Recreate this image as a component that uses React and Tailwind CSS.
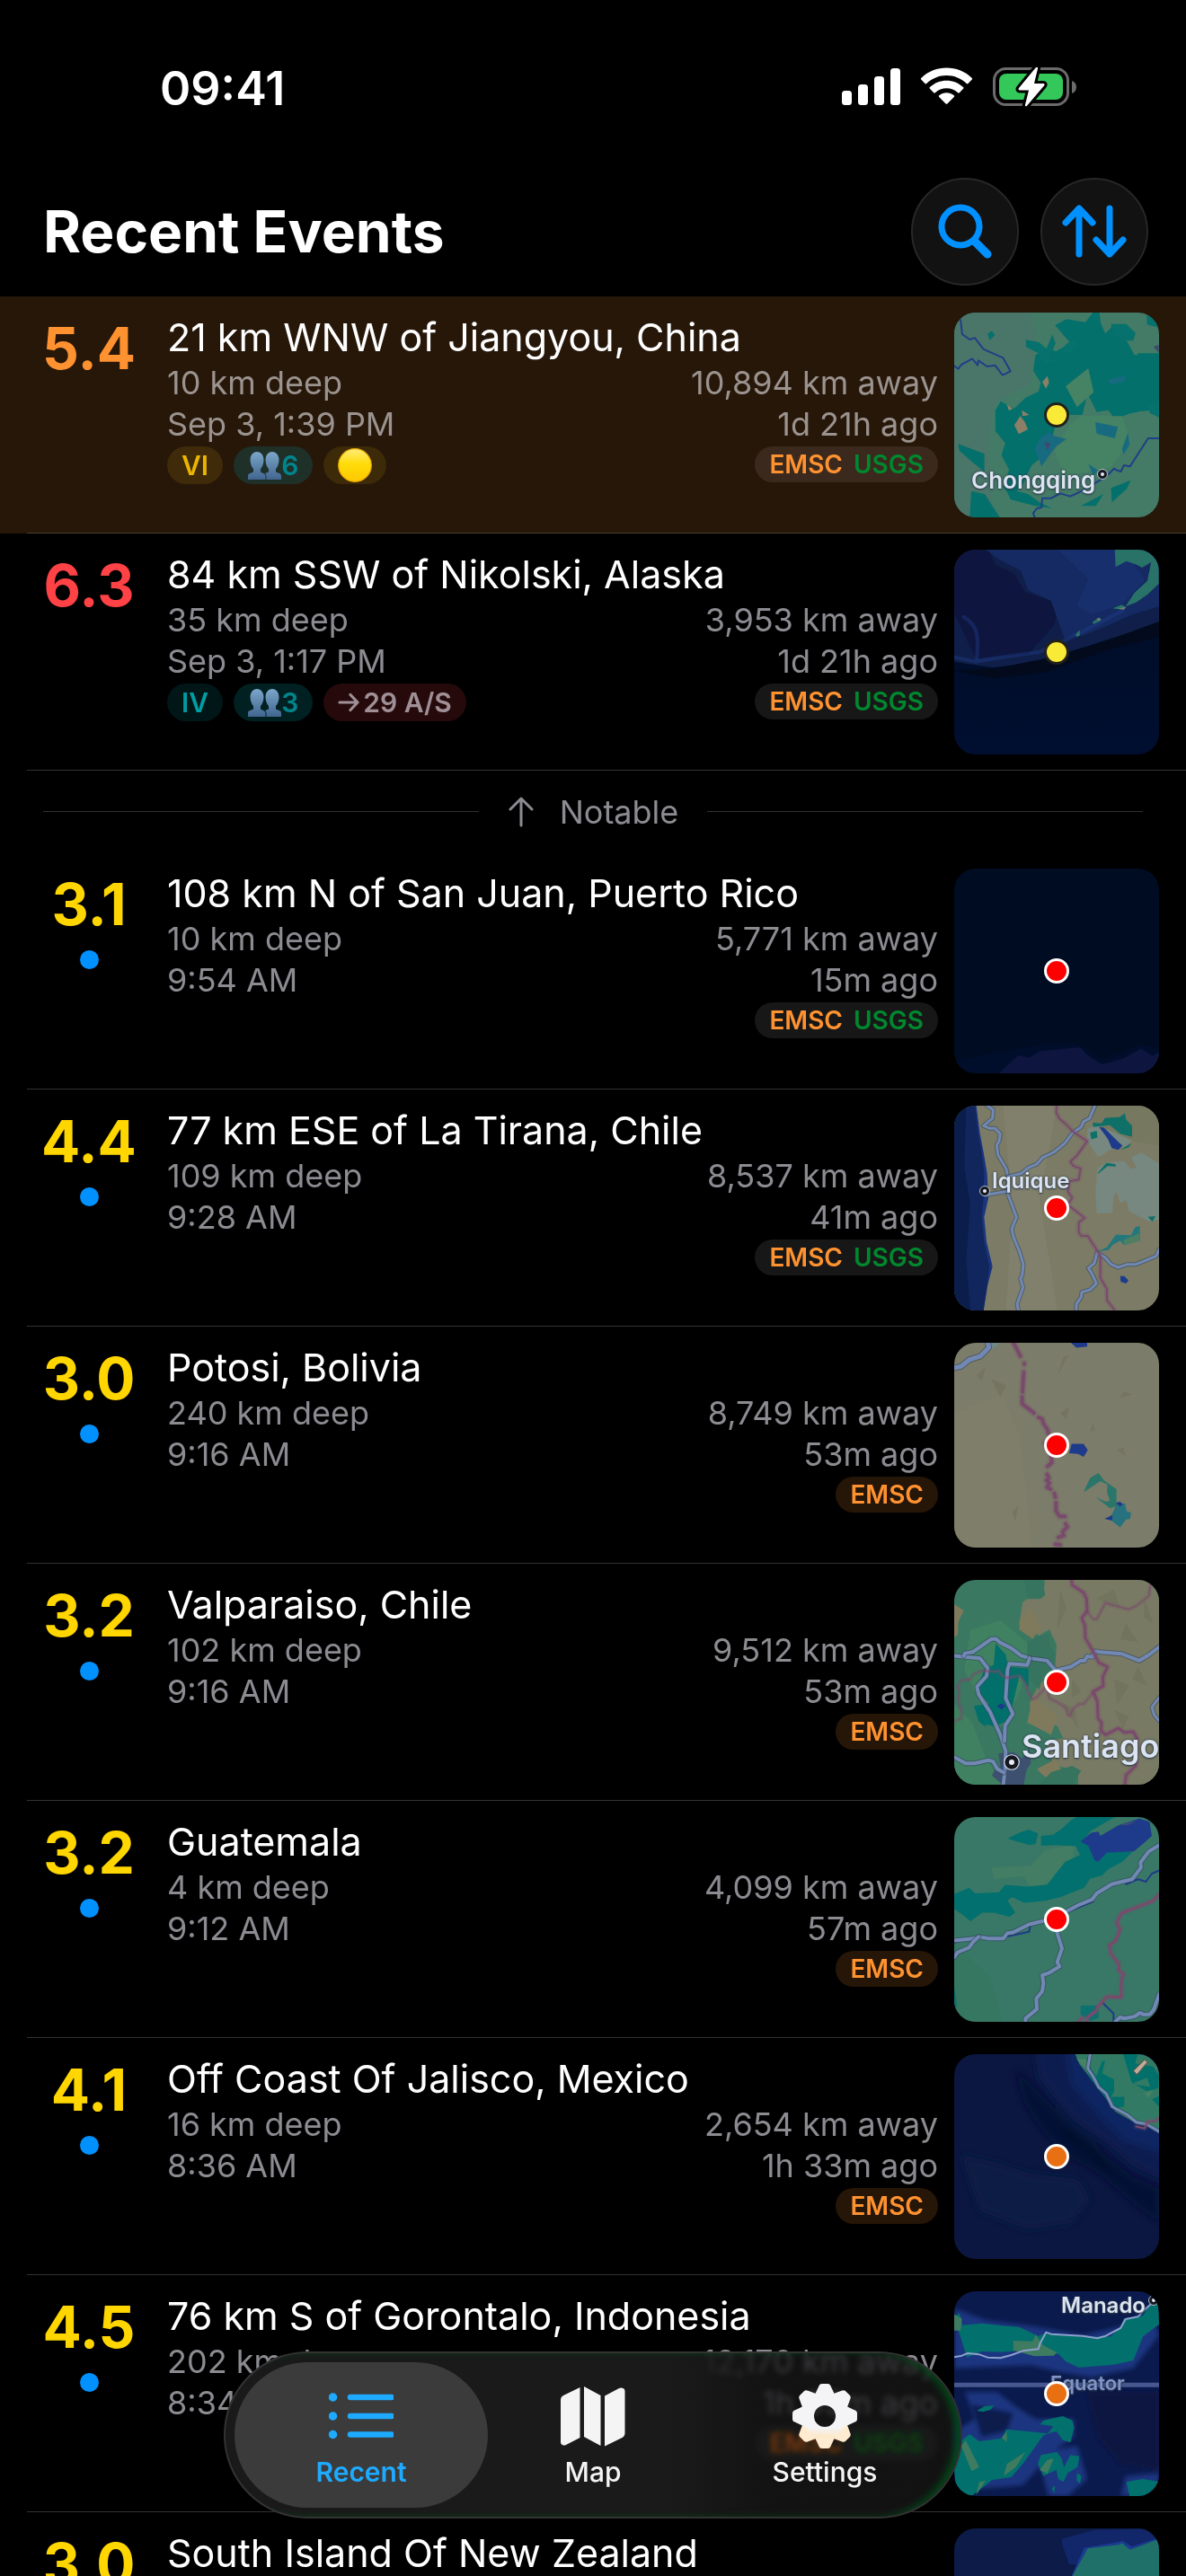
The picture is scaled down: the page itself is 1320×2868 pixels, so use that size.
import clsx from 'clsx';

const events = [
  {
    mag: '5.4',
    magColor: 'text-[#ff9230]',
    place: '21 km WNW of Jiangyou, China',
    depth: '10 km deep',
    time: 'Sep 3, 1:39 PM',
    distance: '10,894 km away',
    ago: '1d 21h ago',
    sources: ['EMSC', 'USGS'],
    map: 'jiangyou',
    marker: 'yellow',
    highlight: true,
    badges: [
      { kind: 'text', label: 'VI', style: 'bg-[#3f2b09] text-[#eab500]' },
      { kind: 'people', label: '6', style: 'bg-[#1f3029] text-[#00858c]' },
      { kind: 'alert', label: 'Yellow alert', style: 'bg-[#3c2a08]' },
    ],
  },
  {
    mag: '6.3',
    magColor: 'text-[#ff4245]',
    place: '84 km SSW of Nikolski, Alaska',
    depth: '35 km deep',
    time: 'Sep 3, 1:17 PM',
    distance: '3,953 km away',
    ago: '1d 21h ago',
    sources: ['EMSC', 'USGS'],
    map: 'nikolski',
    marker: 'yellow',
    badges: [
      { kind: 'text', label: 'IV', style: 'bg-[#011717] text-[#009da3]' },
      { kind: 'people', label: '3', style: 'bg-[#012022] text-[#00858c]' },
      { kind: 'aftershocks', label: '29 A/S', style: 'bg-[#260a0b] text-[#9f9097]' },
    ],
  },
  { divider: 'Notable' },
  {
    mag: '3.1',
    place: '108 km N of San Juan, Puerto Rico',
    depth: '10 km deep',
    time: '9:54 AM',
    distance: '5,771 km away',
    ago: '15m ago',
    sources: ['EMSC', 'USGS'],
    map: 'sanJuan',
    marker: 'red',
    unread: true,
  },
  {
    mag: '4.4',
    place: '77 km ESE of La Tirana, Chile',
    depth: '109 km deep',
    time: '9:28 AM',
    distance: '8,537 km away',
    ago: '41m ago',
    sources: ['EMSC', 'USGS'],
    map: 'tirana',
    marker: 'red',
    unread: true,
  },
  {
    mag: '3.0',
    place: 'Potosi, Bolivia',
    depth: '240 km deep',
    time: '9:16 AM',
    distance: '8,749 km away',
    ago: '53m ago',
    sources: ['EMSC'],
    map: 'potosi',
    marker: 'red',
    unread: true,
  },
  {
    mag: '3.2',
    place: 'Valparaiso, Chile',
    depth: '102 km deep',
    time: '9:16 AM',
    distance: '9,512 km away',
    ago: '53m ago',
    sources: ['EMSC'],
    map: 'valparaiso',
    marker: 'red',
    unread: true,
  },
  {
    mag: '3.2',
    place: 'Guatemala',
    depth: '4 km deep',
    time: '9:12 AM',
    distance: '4,099 km away',
    ago: '57m ago',
    sources: ['EMSC'],
    map: 'guatemala',
    marker: 'red',
    unread: true,
  },
  {
    mag: '4.1',
    place: 'Off Coast Of Jalisco, Mexico',
    depth: '16 km deep',
    time: '8:36 AM',
    distance: '2,654 km away',
    ago: '1h 33m ago',
    sources: ['EMSC'],
    map: 'jalisco',
    marker: 'orange',
    unread: true,
  },
  {
    mag: '4.5',
    place: '76 km S of Gorontalo, Indonesia',
    depth: '202 km deep',
    time: '8:34 AM',
    distance: '12,170 km away',
    ago: '1h 35m ago',
    sources: ['EMSC', 'USGS'],
    map: 'gorontalo',
    marker: 'orange',
    unread: true,
  },
  {
    mag: '3.0',
    place: 'South Island Of New Zealand',
    sources: [],
    map: 'newZealand',
    marker: 'orange',
    unread: true,
  },
];

/* ---------- map drawings ---------- */

const MapLabel = ({ className, children }) => (
  <span
    className={clsx(
      'absolute leading-none font-semibold [text-shadow:0_0_3px_#2f3b46,0_1px_2px_#2f3b46]',
      className
    )}
  >
    {children}
  </span>
);

const CityDot = ({ className }) => (
  <svg viewBox="0 0 12 12" className={clsx('absolute', className)} aria-hidden="true">
    <circle cx="6" cy="6" r="5.500" fill="#16181f" stroke="#dbe4f2" strokeWidth="0.8" />
    <circle cx="6" cy="6" r="2" fill="#e6ecf6" />
  </svg>
);

const Line = ({ d, color = '#7288b4', width = 4, ...rest }) => (
  <path
    d={d}
    fill="none"
    stroke={color}
    strokeWidth={width}
    strokeLinejoin="round"
    strokeLinecap="round"
    vectorEffect="non-scaling-stroke"
    {...rest}
  />
);

const Road = ({ d, width = 4 }) => (
  <>
    <Line d={d} color="#33475a" width={width + 2} opacity="0.6" />
    <Line d={d} width={width} />
  </>
);

const Border = ({ d, width = 3 }) => (
  <>
    <Line d={d} color="#7a4a6c" width={width + 4} opacity="0.25" />
    <Line d={d} color="#7a4a6c" width={width} />
  </>
);

const maps = {
  jiangyou: {
    viewBox: '955 54 542 684',
    art: (
      <>
        <rect x="955" y="54" width="542" height="684" fill="#447b66" />
        <path d="M955 54h200l20 90-20 150-90 60-20 120 10 260h-100z" fill="#4a7669" />
        <path d="M1327 54h12l4 35 10 30 14 20 20 30 20 25 90 6v178l-50 6-30 8-35 18-20-30-30 6-24-60-14 70h-36l-36 40-10 50-22 48-30 30-22 60-30 44-24-30 16-60-20-48 10-40-26-40 0-70 14-30 36 24 30-36 34-20 6-30-20-40 6-52 34-26 20 14 38-28-40-60 30-20 50 10 50-80z" fill="#04706c" />
        <path d="M1290 220l44-66 40-56 34 42 30 70-30 60-60 10zM1440 190h57v180h-60z" fill="#04706c" />
        <path d="M1145 145l34 8 20 22 16-48 8 30-16 50 22 12-36 4-16-34-32-20zM1250 160l30-20-4 30-18 24-14-8zM1370 92l40 0 25 30-6 26-30 0-26-26zM1043 125l12-10 8 14-14 18zM1465 54h32v50l-32-10zM1464 360l33-6v50l-24-14z" fill="#06716d" />
        <path d="M965 492l70 34v60l-30-30-36-40zM1000 650l36 10 20 40 20 38h-80zM1090 640l60 20 34 30 30 18-50-10-60-20zM1370 640l52-26-10 28-40 46zM1290 700l60-40-20 40z" fill="#04706c" />
        <path d="M1250 300l60-60 14 80-44 50zM1290 400l110 0 20 80-50 90-120 30-30-80 40-90z" fill="#468264" />
        <path d="M1184 470l22-16 12 12 34 10-28 26-18 30-20 36-18-60zM1328 420l60 16-8 38-48-16zM1310 560l24 20-10 22zM1415 455l4 40-16 34-4-20zM1362 280l50-18-10 24-34 8z" fill="#176a80" />
        <path d="M1130 400l12 20 8 24-24 16-12-30zM1202 266l4 22-8 20-10-22zM1094 360l16 14-10 8zM1134 380l20 16-18 4z" fill="#8c7f68" />
        <path d="M1194 485l16 6-8 24zM1482 168l14-6v26z" fill="#40486f" />
        <Line d="M972 78L976 126 996 144 1010 139 1032 176 1084 205 1104 250 1083 263 1063 230 1042 234 1019 214 1017 230 1003 208 974 228 966 242 955 232" color="#1f3f86" width={2} />
        <Line d="M1497 474H1468L1420 568 1404 564 1396 585 1384 580 1378 575 1358 600 1330 622 1286 654 1262 668 1236 658 1212 674 1188 674 1186 705 1174 708 1164 724 1168 738" color="#1f3f86" width={2} />
      </>
    ),
    labels: (
      <>
        <MapLabel className="top-[174px] left-[19px] text-[26px] text-[#dbe4f2]">Chongqing</MapLabel>
        <CityDot className="top-[174px] left-[159px] size-3" />
      </>
    ),
  },
  nikolski: {
    viewBox: '955 66 542 684',
    art: (
      <>
        <defs>
          <linearGradient id="pacific" x1="0" y1="0" x2="0" y2="1">
            <stop offset="0" stopColor="#000d24" />
            <stop offset="1" stopColor="#000e30" />
          </linearGradient>
        </defs>
        <rect x="955" y="66" width="542" height="684" fill="url(#pacific)" />
        <path d="M955 66h542v250l-120 44-100 40-90 40-130 20-102-20z" fill="#101f4a" />
        <path d="M955 66h90l20 50 50 30 26 60 90 40-10 70-70 100-140 12-56-150z" fill="#0e163f" />
        <path d="M1040 66h457v190l-70 26-70 40-60 30-50 10-36-126-60-34-20-66-56-36z" fill="#152a62" />
        <path d="M1230 66h170l60 100-60 80-80 36-40-30 30-90z" fill="#1a3273" opacity="0.7" />
        <Line d="M980 290C1020 320 1020 360 1014 436M955 425L1010 440 1080 425 1180 408 1250 368 1340 310 1400 270" color="#21408f" width={4} opacity="0.4" />
        <path d="M955 470l120-10 120-30 140-50 162-74v50l-150 50-150 70-140 20z" fill="#020a1c" />
        <path d="M1380 66h96l20 50v64l-30 36-30 26-28 14 24-46 34-40 10-62-24 18-14-10-28-12-28 20z" fill="#287268" />
        <path d="M1374 262l24-12 12 8-12 8zM1320 308l20-16 4 10-20 12zM1276 350l10-16 2 18-8 6z" fill="#287268" />
        <path d="M1388 262l22-4-6 8zM1332 294l12 4-8 6z" fill="#7c806a" />
      </>
    ),
  },
  sanJuan: {
    viewBox: '66 78 684 662',
    art: (
      <>
        <rect x="66" y="78" width="684" height="662" fill="#000c22" />
        <path d="M66 700l150-30 150-25h110l90 50 130-50 54 20v75H66z" fill="#000e2c" />
        <path d="M215 740l65-58 35 8 40-22 130-12 30 28 45 28 70-20 60-32 38 24 22-12v68z" fill="#0e163f" />
      </>
    ),
  },
  tirana: {
    viewBox: '66 845 684 662',
    art: (
      <>
        <rect x="66" y="845" width="684" height="662" fill="#7c7c66" />
        <path d="M230 845h180l-60 300 60 362H240l20-340z" fill="#848471" opacity="0.6" />
        <path d="M520 845h230v130l-110-20-90 40z" fill="#76785f" />
        <path d="M66 845h74l12 90 12 60 12 70 4 80-14 60 8 80 20 80-16 60-14 82H66z" fill="#1a3580" />
        <path d="M66 845h70l10 90 12 60 8 70-2 80-6 60 8 80 18 80-20 142H66z" fill="#11265c" />
        <path d="M66 845h40l-6 200 20 120-14 180 14 162H66z" fill="#0b1d4a" />
        <path d="M512 920l28-12 16 6 60 24 44 20-24 20-50 10-40 24-12-20-24-34zM658 1012l34-16 20 14 38 22v180l-30 8-70-34-8-34-24 6-4-24-10-8-6 12-4 54-52 2-4-66 6-80 30-20 60-4 20 26 20-4z" fill="#778880" />
        <path d="M528 900l30 2 12-18 48-2 18-12 4 20 20 20v36l-40-10-34-28-56 6zM520 932l22-6 2 22-20 6zM620 988l38-22-10 14zM544 1064l30-34 30 4 2 8-28-2-30 24zM712 1204l26-2-10 18z" fill="#0f7068" />
        <path d="M546 1316l30-14 30-40 50 2 14-26 16-4v48l-54 12-12-12-24 12-14 18z" fill="#24787c" />
        <path d="M630 1280l54-22v24l-46 14z" fill="#4e7f62" />
        <path d="M550 914l16 2 50 48 12 10-14 14-22-6-12-28zM620 1396h14l14 14-8 10-18-6z" fill="#1e3a8a" />
        <Road d="M176 845L196 858 194 886 164 910 184 918 202 918 220 936 216 960 208 972 212 1004 240 1050 245 1074 245 1130 274 1205 258 1244 264 1270 284 1316 297 1358 293 1395 287 1404 296 1432 276 1486 280 1506" width={3} />
        <Road d="M536 845L518 886 498 896 490 914 460 934 436 966 398 996 362 1012 342 1034 316 1044 290 1064 245 1074" width={3} />
        <Road d="M750 1310L740 1332 672 1358 644 1358 614 1368 590 1358 570 1336 543 1320 534 1354 514 1370 528 1392 541 1420 520 1440 492 1448 490 1464 474 1486V1507M170 1134L240 1122" width={3} />
        <Border d="M408 845L406 866 418 888 436 902 464 930 510 960 476 1006 454 1026 464 1040 488 1048 482 1084 450 1090 446 1124 460 1142 446 1166 502 1208 482 1222V1254L490 1266H512L546 1318 554 1330V1402L576 1438V1474L600 1504" width={2} />
      </>
    ),
    labels: (
      <>
        <MapLabel className="top-[72px] left-[42px] text-[24px] text-[#dbe4f2]">Iquique</MapLabel>
        <CityDot className="top-[89px] left-[28px] size-3" />
      </>
    ),
  },
  potosi: {
    viewBox: '66 73 684 662',
    art: (
      <>
        <rect x="66" y="73" width="684" height="662" fill="#7b7c69" />
        <path d="M66 300l160-60 60 140 40 355H66z" fill="#82816d" opacity="0.6" />
        <path d="M190 190l50 20-20 40zM410 180l20-60 20-10zM420 300l30-20-10 40zM630 230l30 10-40 12zM520 360l10-30 6 26zM140 180l30-30-10 46zM610 420l20-10 10 30zM260 620l20-20-10 50z" fill="#6f705b" opacity="0.6" />
        <Road d="M178 73L182 88 154 116 116 128 88 150 66 154" width={5} />
        <path d="M190 73h30l-26 22z" fill="#6d8886" />
        <path d="M456 73h54v12l-36 4zM450 430l8-30h40l14 20-14 22-18-10z" fill="#1e3a8a" />
        <path d="M498 556l22-46 28-16 18 24 42 28v46l6 8-28 8-48-36 36 16 12-6-10-24 2-26-24-12-40 26z" fill="#2b766a" />
        <path d="M592 630l14-30 30-8 6 26 14 4-2 20-14 2-20 26-26-20z" fill="#27727e" />
        <path d="M606 592l12-6 12 8-10 8zM568 642l26-12v18z" fill="#1e3a8a" />
        <Border d="M264 73L287 116M300 140V142M298 168L294 232M293 248V270L332 300M348 314L360 320 364 334 378 354 380 366M370 396L390 440 392 460 378 472M376 498L382 510 374 518 384 526 376 540 388 546M400 560L404 572M406 590V616L418 634H436M438 658L444 668 428 684 432 696 414 702M404 724L420 726" width={4} />
      </>
    ),
  },
  valparaiso: {
    viewBox: '66 839 684 662',
    art: (
      <>
        <rect x="66" y="839" width="684" height="662" fill="#3a7862" />
        <path d="M66 1240l60 60 40 100 60 101H66zM120 1000l100-30 100 80-30 140-60 120-70-60-60-120z" fill="#3f8160" />
        <path d="M272 839h478v662H480v-50l-80-10-30-80 60-10-20-40-88-30-4-44 30-60 54-40 6-88-24-50-34 20-26-14-40-24 10-70 46-28 28-20 0-26-40 0-12-26-22-4z" fill="#797a63" />
        <path d="M66 918l32 20-18 36-2 44-12 6zM342 1450l60-30 20 30-30 40-30-20zM284 970l40-40 30 60-26 40-44-30zM330 1210l80 70-20 60-80-40z" fill="#7f7a5c" />
        <path d="M420 870l20 60-30 70zM540 900l60-30 20 60zM640 980l40 60-60-10zM600 1160l50 20-40 60zM460 1160l30 40-30 20zM680 1120l30 60-50-20zM420 1230l50 30 10 60zM600 1260l50 20-20 40zM700 900l30 80-30-20z" fill="#6c6e59" opacity="0.5" />
        <path d="M300 839h60l10 48-16 14-44 0zM310 1110l0-70 40-20 34-6 0 40 20 20-4 60-40 20-10 40-40-40z" fill="#37745f" />
        <path d="M204 1044l34 36 8 40 68 6v62l-30-40-10 40-14 60 0 40-60 24-30-6 4 10-26-20-16-50 50-6-40-46 26-70 30-10z" fill="#02706a" />
        <path d="M390 1460l70-20 30 16-30 45h-110l20-20z" fill="#37745f" />
        <path d="M214 1400l50-4 30 20 24-34 4 50-14 20-10 49h-70l-36-30 10-20 20 4z" fill="#3d5070" />
        <path d="M208 1248l14-10 16 8-14 12z" fill="#1e3a8a" />
        <Road d="M66 1084L152 1092 178 1124 174 1150 142 1184 148 1210 186 1266 220 1340 238 1392 236 1450 230 1501" />
        <Road d="M98 1084L102 1076 128 1072 190 1030 206 1030 220 1042 254 1058 290 1084 318 1092 376 1100 404 1132 456 1120 488 1100 502 1100 510 1086 528 1088 536 1070 552 1072 626 1078 684 1100 718 1080 750 1056" />
        <Road d="M318 1092L310 1114 250 1110 244 1130 238 1222 262 1272 236 1310 234 1360M66 1412L104 1432 134 1432 180 1422 196 1426 210 1450 232 1462" />
        <Road d="M750 1220L726 1250 734 1276 750 1294" width={3} />
        <Border d="M458 839L460 856 498 880 508 900 510 940 492 962 502 986 504 1028 530 1070 548 1106 578 1120 562 1152 564 1182 530 1200 544 1232 546 1286 558 1300 556 1326 572 1340 614 1318 634 1332 664 1330 676 1350 672 1440 640 1470 636 1501" />
        <Border d="M508 940L530 966 542 966 570 914 600 922 648 934 676 922 704 900 716 890 722 852M72 1294L90 1286 92 1274 78 1220 84 1206 78 1180 92 1162 118 1162 130 1144 160 1132 204 1136 216 1132 222 1146 244 1156 284 1148 304 1174 312 1200 326 1224 340 1220 370 1188M376 1196L384 1222 410 1234 440 1254 446 1276 454 1278 462 1256 484 1240 498 1240 530 1204" width={1} />
      </>
    ),
    labels: (
      <>
        <MapLabel className="top-[167px] left-[75px] text-[36px] text-[#dbe4f2]">Santiago</MapLabel>
        <CityDot className="top-[194px] left-[55px] size-[18px]" />
      </>
    ),
  },
  guatemala: {
    viewBox: '66 67 684 662',
    art: (
      <>
        <rect x="66" y="67" width="684" height="662" fill="#397866" />
        <path d="M190 230l130-6 50-50 100-20-10 60-60 60-80 24-20-40-100 10z" fill="#427d64" />
        <path d="M66 480l120 100 40 149H66z" fill="#35765f" opacity="0.6" />
        <path d="M246 136l40-20 30-8 30 12-8 34-20 4-70-20zM356 128l40-4 30-20 30-26 20-11h126l-80 45-40 50-76-4-50 2zM66 316l50-20 20 18 80-4 20-24 70 6 70-6 60-74 50-22-20-40 50-6 144 36-30 30-50 26-20 20-40 10-20 30-80 30-50 12-70 6-40-18-16 10 26 40-20 14-50-14-40 0-40 28-24-20-30-20z" fill="#02706e" />
        <path d="M488 676l58 0 4 40-30 10-32-20zM66 616l10 60-10 20z" fill="#0c7270" />
        <path d="M488 146l36-28 24-4 6 14 60-34 70-22 34 10 8 46-30 26-30 24-90 4-30 30-12-6-20-46z" fill="#1e3a8a" />
        <path d="M620 94l30-12 24 0-30 12z" fill="#3a4a78" />
        <Line d="M66 474L84 466 130 462M240 454L316 438 320 420M640 284L680 268 706 276 726 250 750 240M560 666L598 702V729M440 376L530 340" color="#1e3a8a" width={2} />
        <Road d="M66 466L132 460 148 454 182 460H230L244 442 262 440 316 414 360 404 410 388 480 352 526 334 542 314 592 284 660 268 690 230 688 214 716 178 750 158" />
        <Road d="M66 520L78 504 114 490 132 468 148 454M406 430L426 492 410 536 418 550 380 572 360 578 364 604 360 630 340 654 342 688 304 718V729M604 729L620 714 634 718 668 712 686 700 700 706 720 704 732 690 750 640" />
        <Border d="M750 318L730 338 624 378 608 410 620 428 606 466 584 482 590 510 616 542V564L632 576 624 592V650L576 648 544 682 540 694 512 714 508 729M494 716L480 729" />
      </>
    ),
  },
  jalisco: {
    viewBox: '66 834 684 662',
    art: (
      <>
        <defs>
          <filter id="sea" x="-20%" y="-20%" width="140%" height="140%">
            <feGaussianBlur stdDeviation="14" />
          </filter>
        </defs>
        <rect x="66" y="834" width="684" height="662" fill="#0b1740" />
        <g filter="url(#sea)">
          <path d="M330 800h460v454l-130-60-80-70-120-80-110-130z" fill="#0d1f50" />
          <path d="M440 800h350v360l-160-50-90-90-80-90z" fill="#102564" />
          <path d="M270 880l70 70 90 90 90 70 60 60 80 60 90 40v110l-80-60-60-50-60-50-110-60-80-80-60-90z" fill="#071233" opacity="0.85" />
          <path d="M420 1070l110 66 60 64-24 0-60-60-76-46z" fill="#000a28" />
          <path d="M90 1160l100 20 130 40 160 20 40 60-60 80-150 20-160-60z" fill="#0c1b45" />
        </g>
        <path d="M470 834h280v246l-80-24-66-36-40-54-40-50-40-50z" fill="#337a64" />
        <path d="M508 846l12 0 0 30 20 30 20-50 10 0-10 40 40 20 0 40-20 30-34-40-30-40zM588 972h46v32l-30 4zM630 834h50l-10 30 60 10 20 30-2 40-40 10-50-30zM660 930l60 10-10-30zM726 980l24-10v34z" fill="#02706a" />
        <path d="M474 850l34 0 0 34zM700 960l30-10-14 26z" fill="#468264" />
        <Road d="M520 834L512 880 530 906 548 940 574 962 594 1004 644 1030 674 1054 708 1060 750 1084" width={3} />
        <Border d="M674 1068L702 1074 712 1052 738 1050 750 1042" width={2} />
        <path d="M664 888l38-36 10 8-36 40z" fill="#c4ab97" stroke="#5b5a4c" strokeWidth="3" />
      </>
    ),
  },
  gorontalo: {
    viewBox: '846 63 638 684',
    art: (
      <>
        <defs>
          <filter id="shelf" x="-20%" y="-20%" width="140%" height="140%">
            <feGaussianBlur stdDeviation="8" />
          </filter>
        </defs>
        <rect x="846" y="63" width="638" height="684" fill="#0b1a4c" />
        <g filter="url(#shelf)">
          <path d="M846 120l100 40 150 20 150 30 120-30 90-60 28 90-80 110-130 30-110-20-80-20-238 10z" fill="#1a3480" />
          <path d="M880 400l100 0 60 50 60 40 120 0 0 60-60 40-100 120-210 20v-200l60-40zM1100 600l130-20 30 110-60 57h-60zM1380 680l104-10v77h-120z" fill="#1a3480" />
          <path d="M900 440l130 30-20 60-80 20z" fill="#0b1a4c" />
          <path d="M1260 400h224v260l-120-20-70-90z" fill="#0a1640" />
        </g>
        <path d="M846 150l16-14 10 40 60-6 66 8 50 4 60 30 26-10 120 14 80-2 30-30 10-30 60-10 46-80 4 110-50 40-30 80-60 14-110 10-40-20-24-26-120-10-60 4-60-2-44 20z" fill="#02706c" />
        <path d="M1030 228l60 2 10-22 22 34 44 26-10 10-60 2-66-20zM846 140l24 14-4 40-20 0z" fill="#3f7b60" />
        <path d="M870 560l24-20 30 24 70-10 14-30 40 4 90 10 16-24-40-6 10-14 60-14 30 14 6 24-12 50-24-8-20-30-40 14-60 90-40 50-60 10-60 50h-30l-24-40-4-50z" fill="#02706c" />
        <path d="M868 580l14-20 42 90-24 14zM1000 680l10-40 58-40-30 50zM914 744l10-44 20-4zM994 552l16-20v34z" fill="#3f7b60" />
        <path d="M916 462l26-16 28-2-10 14-24 8zM1106 640l10-30 50-10 14 20 8 30 20-40 28 4-6 36-30 20-14 30-16-10-6-30-20 10-20 10zM1228 670l14 10-4 26-10-10zM1150 722l10-10-2 26zM1382 700l50-10 50 8v49h-90z" fill="#02706c" />
        <path d="M1112 660l24-34 20-4-20 50z" fill="#3f7b60" />
        <Line d="M846 376H1484" color="#46588f" width={5} />
        <Line d="M846 283L870 278 888 270 924 274 950 284 990 286 1024 276 1060 262 1108 256 1114 236 1132 200 1148 206 1246 212 1292 220 1318 212 1364 186 1380 156 1418 148 1440 124 1460 104" color="#8da0cc" width={2} />
      </>
    ),
    labels: (
      <>
        <MapLabel className="top-[4px] left-[119px] text-[24px] text-[#dbe4f2]">Manado</MapLabel>
        <MapLabel className="top-[91px] left-[107px] text-[22px] text-[#8094cc]">Equator</MapLabel>
        <CityDot className="top-[4px] left-[216px] size-3" />
      </>
    ),
  },
  newZealand: {
    viewBox: '846 855 638 684',
    art: (
      <>
        <rect x="846" y="855" width="638" height="684" fill="#0c1b48" />
        <path d="M1180 890l100-30 204-5v120h-280l-20-60z" fill="#12266a" />
        <path d="M1250 920l110-20 10-4 30 20 84-30v653h-400l60-300 66-220z" fill="#1b3b90" />
        <path d="M1262 922l96-12 10-6 26 22 90-36v649h-390l60-290 58-230z" fill="#1f7068" />
      </>
    ),
  },
};

const markerStyles = {
  yellow: 'border-[#22211a] bg-[#faea38]',
  red: 'border-white bg-[#ff0000]',
  orange: 'border-white bg-[#e96f13]',
};

const MapThumb = ({ name, marker }) => {
  const { viewBox, art, labels } = maps[name];
  return (
    <div className="relative size-[228px] shrink-0 overflow-hidden rounded-3xl">
      <svg viewBox={viewBox} preserveAspectRatio="none" className="size-full" aria-hidden="true">
        {art}
      </svg>
      {labels}
      <span
        className={clsx('absolute inset-0 m-auto size-7 rounded-full border-3', markerStyles[marker])}
      />
    </div>
  );
};

/* ---------- row pieces ---------- */

const PeopleIcon = () => (
  <svg viewBox="0 0 37 31" className="h-[31px] w-[37px]" aria-hidden="true">
    <defs>
      <linearGradient id="people" x1="0" y1="0" x2="0" y2="1">
        <stop offset="0" stopColor="#7ba6c9" />
        <stop offset="1" stopColor="#41658f" />
      </linearGradient>
    </defs>
    <g fill="url(#people)">
      <path d="M10 0c4.500 0 7.500 4 7.500 9 0 4-1.500 8-3.500 10v3.500l4 2c1 .5 1.500 1.500 1.500 3V31H0v-3.500c0-1.500.3-2.400 1-3l5-2V19c-2-2-3.500-6-3.500-10 0-5 3-9 7.500-9z" />
      <path d="M27 0c4.500 0 7.500 4 7.500 9 0 4-1.500 8-3.500 10v3.500l5 2c.7.600 1 1.500 1 3V31H20.500v-3.500c0-1.500-.5-2.800-1.500-3.500l4-1.500V19c-2-2-3.500-6-3.500-10 0-5 3-9 7.500-9z" />
    </g>
  </svg>
);

const AlertBall = () => (
  <svg viewBox="0 0 38 38" className="size-[38px]" role="img" aria-label="Yellow alert">
    <defs>
      <linearGradient id="ball" x1="0" y1="0" x2="0" y2="1">
        <stop offset="0" stopColor="#ffec7a" />
        <stop offset="0.45" stopColor="#ffdc0a" />
        <stop offset="1" stopColor="#ffc800" />
      </linearGradient>
    </defs>
    <circle cx="19" cy="19" r="18.300" fill="url(#ball)" stroke="#e9a800" strokeWidth="1.200" />
  </svg>
);

const Badge = ({ kind, label, style }) => (
  <span
    className={clsx('flex h-[42px] items-center rounded-full px-4 text-[30px] font-semibold', style)}
  >
    {kind === 'people' && <PeopleIcon />}
    {kind === 'aftershocks' && (
      <svg viewBox="0 0 24 24" className="mr-1 size-6" fill="none" stroke="currentColor" aria-hidden="true">
        <path d="M2 12h20M14 3.500L22 12l-8 8.500" strokeWidth="3.200" strokeLinecap="round" strokeLinejoin="round" />
      </svg>
    )}
    {kind === 'alert' ? <AlertBall /> : label}
  </span>
);

const sourceColors = { EMSC: 'text-[#ff9230]', USGS: 'text-[#00882f]' };

const Sources = ({ sources, highlight }) => {
  const bg = highlight ? 'bg-[#3b291d]' : sources.length > 1 ? 'bg-[#171717]' : 'bg-[#261607]';
  return (
    <span className={clsx('mt-0.5 flex h-10 items-center gap-3 rounded-full px-4 text-[28px] font-semibold', bg)}>
      {sources.map((s) => (
        <span key={s} className={sourceColors[s]}>
          {s}
        </span>
      ))}
    </span>
  );
};

const EventRow = ({ event }) => {
  const { mag, magColor = 'text-[#ffd600]', place, depth, time, distance, ago } = event;
  return (
    <li className={clsx('flex h-[264px] shrink-0 flex-col', event.highlight && 'bg-[#261709]')}>
      <div className="flex flex-1 px-[30px] pt-[18px]">
        <div className="mr-[18px] flex w-[138px] shrink-0 flex-col items-center">
          <span className={clsx('text-[64px] leading-[80px] font-bold', magColor)}>{mag}</span>
          {event.unread && <span className="mt-[11px] size-[21px] rounded-full bg-[#0091ff]" />}
        </div>
        <div className="mr-[18px] min-w-0 flex-1">
          <h2 className="truncate text-[43px] leading-[55px] text-white">{place}</h2>
          <div
            className={clsx(
              'flex justify-between text-[36px] leading-[46px]',
              event.highlight ? 'text-[#9b938f]' : 'text-[#8c8b91]'
            )}
          >
            <div>
              <p>{depth}</p>
              <p>{time}</p>
              {event.badges && (
                <div className="mt-0.5 flex gap-3">
                  {event.badges.map((b) => (
                    <Badge key={b.label} {...b} />
                  ))}
                </div>
              )}
            </div>
            <div className="flex flex-col items-end">
              <p>{distance}</p>
              <p>{ago}</p>
              {event.sources.length > 0 && <Sources sources={event.sources} highlight={event.highlight} />}
            </div>
          </div>
        </div>
        <MapThumb name={event.map} marker={event.marker} />
      </div>
      <div className={clsx('ml-[30px] h-px', event.highlight ? 'bg-[#4a3e33]' : 'bg-[#323234]')} />
    </li>
  );
};

const SectionDivider = ({ label }) => (
  <li className="flex h-[91px] shrink-0 items-center gap-8 px-12 text-[36px] text-[#8c8b91]">
    <span className="h-px flex-1 bg-[#323234]" />
    <span className="flex items-center gap-7">
      <svg viewBox="0 0 30 34" className="h-[34px] w-[30px]" fill="none" stroke="currentColor" aria-hidden="true">
        <path d="M15 32V2M3 14L15 2l12 12" strokeWidth="3" strokeLinecap="round" strokeLinejoin="round" />
      </svg>
      {label}
    </span>
    <span className="h-px flex-1 bg-[#323234]" />
  </li>
);

/* ---------- chrome ---------- */

const StatusBar = () => (
  <div className="flex items-center justify-between pt-[71px] pr-[120px] pl-[178px]">
    <span className="text-[52px] leading-[56px] font-semibold">09:41</span>
    <svg viewBox="936 75 264 48" className="h-12 w-[264px]" aria-hidden="true">
      <g fill="#fff">
        <rect x="937" y="101" width="11" height="16" rx="3.500" />
        <rect x="955" y="94" width="11" height="23" rx="3.500" />
        <rect x="973" y="85" width="11" height="32" rx="3.500" />
        <rect x="991" y="76" width="11" height="41" rx="3.500" />
        <path d="M1053.500 84c8.500 0 16.500 3.400 22.300 9 .5.500 1.200.5 1.700 0l4.300-4.400c.5-.5.5-1.200 0-1.700-15.800-15.100-40.800-15.100-56.600 0-.5.500-.5 1.200 0 1.700l4.300 4.400c.5.500 1.200.5 1.700 0 5.900-5.600 13.800-9 22.300-9z" />
        <path d="M1053.500 98.300c4.700 0 9.200 1.700 12.600 4.900.5.500 1.200.4 1.700 0l4.300-4.400c.5-.5.5-1.200 0-1.700-10.500-9.800-26.700-9.800-37.200 0-.5.500-.5 1.200 0 1.700l4.300 4.400c.5.500 1.200.5 1.700 0 3.400-3.200 7.900-4.900 12.600-4.900z" />
        <path d="M1061.800 107.900c.5-.5.5-1.300 0-1.700-4.800-4.100-11.800-4.100-16.600 0-.5.400-.5 1.200 0 1.700l7.400 7.500c.5.500 1.300.5 1.800 0z" />
      </g>
      <rect x="1106.500" y="76.500" width="82" height="40" rx="13" fill="none" stroke="#6b6b6b" strokeWidth="3" />
      <path d="M1193 90c3 1 5 3.600 5 7s-2 6-5 7z" fill="#6b6b6b" />
      <rect x="1112" y="82" width="71" height="29" rx="8" fill="#34c759" />
      <path
        d="M1153 75l-19 23c-1 1.500-.4 2.500 1.200 2.500h9.800l-4 16c-.5 2 1 2.500 2.200 1l18.800-22c1.200-1.500.5-2.500-1.200-2.500h-9.800l4-16.500c.4-2-1-2.800-2-1.500z"
        fill="#fff"
        stroke="#000"
        strokeWidth="6"
        paintOrder="stroke"
      />
    </svg>
  </div>
);

const RoundButton = ({ label, children }) => (
  <button
    type="button"
    aria-label={label}
    className="size-[120px] rounded-full border-2 border-[#272727] bg-[#121212] text-[#0091ff]"
  >
    <svg viewBox="2 2 116 116" className="size-full" fill="none" stroke="currentColor" strokeLinecap="round" strokeLinejoin="round">
      {children}
    </svg>
  </button>
);

const Header = () => (
  <header className="flex items-center justify-between pt-[71px] pr-[42px] pb-3 pl-12">
    <h1 className="text-[64px] leading-[80px] font-bold">Recent Events</h1>
    <div className="flex gap-6">
      <RoundButton label="Search">
        <circle cx="55" cy="54" r="21" strokeWidth="7" />
        <path d="M71 71l14 14" strokeWidth="9" />
      </RoundButton>
      <RoundButton label="Sort">
        <path d="M43 85V34M28 50l15-16 15 16M77 34v51M62 69l15 16 15-16" strokeWidth="7" />
      </RoundButton>
    </div>
  </header>
);

const ListIcon = () => (
  <svg viewBox="0 0 72 72" className="size-[72px]" stroke="currentColor" strokeLinecap="round" aria-hidden="true">
    <path d="M4.500 15h.1M4.500 36h.1M4.500 56.500h.1" strokeWidth="9.500" />
    <path d="M24 15h46M24 36h46M24 56.500h46" strokeWidth="6.500" />
  </svg>
);

const MapIcon = () => (
  <svg viewBox="0 0 72 72" className="size-[72px]" fill="currentColor" aria-hidden="true">
    <path d="M21.500 4v56L6 68c-3 1.500-6 0-6-3V18c0-2.200 1-3.800 3-5zM26 3l18.500 10v56L26 59zM49 13.500L65 5c3-1.500 6.500 0 6.500 3v47c0 2.200-1 3.800-3 5L49 69.500z" />
  </svg>
);

const GearIcon = () => (
  <svg viewBox="-36 -36 72 72" className="size-[72px]" aria-hidden="true">
    <defs>
      <linearGradient id="gear" gradientUnits="userSpaceOnUse" x1="0" y1="-36" x2="0" y2="36">
        <stop offset="0.68" stopColor="#f4f3f5" />
        <stop offset="0.85" stopColor="#ffe6bf" />
        <stop offset="1" stopColor="#fff4e2" />
      </linearGradient>
    </defs>
    <circle r="19.500" fill="none" stroke="url(#gear)" strokeWidth="15" />
    {[0, 45, 90, 135, 180, 225, 270, 315].map((deg) => (
      <path
        key={deg}
        d="M-11-24l4.200-9c.7-2 1.800-3 3.600-3h6.400c1.800 0 2.900 1 3.600 3L11-24z"
        fill={deg > 90 && deg < 270 ? '#ffecd0' : '#f4f3f5'}
        transform={`rotate(${deg})`}
      />
    ))}
  </svg>
);

const tabs = [
  { label: 'Recent', icon: ListIcon, active: true },
  { label: 'Map', icon: MapIcon },
  { label: 'Settings', icon: GearIcon },
];

const TabBar = () => (
  <nav className="fixed bottom-16 left-1/2 -translate-x-1/2 overflow-hidden rounded-full border-2 border-[#333333] bg-linear-to-r from-[#1a1a1a] from-60% to-[#1a1a1a]/70 to-75% p-[10px] backdrop-blur-[3px] backdrop-saturate-200">
    <span className="absolute inset-0 rounded-full [box-shadow:inset_-8px_0_10px_-2px_#04491a]" />
    <div className="relative flex">
      {tabs.map(({ label, icon: Icon, active }) => (
        <a
          key={label}
          href={`#${label.toLowerCase()}`}
          aria-current={active ? 'page' : undefined}
          className={clsx(
            '-ml-6 flex h-[162px] w-[282px] flex-col items-center rounded-full pt-6 text-[30px] leading-9 first:ml-0',
            active ? 'bg-[#3b3b3b] font-semibold text-[#1eaaff]' : 'font-medium text-[#f4f4f4]'
          )}
        >
          <Icon />
          <span className="mt-2">{label}</span>
        </a>
      ))}
    </div>
  </nav>
);

export default function App() {
  return (
    <div className="flex h-screen flex-col overflow-hidden bg-black font-['Inter','Liberation_Sans',sans-serif] text-white">
      <StatusBar />
      <Header />
      <ul className="flex flex-1 flex-col overflow-hidden">
        {events.map((item) =>
          item.divider ? (
            <SectionDivider key={item.divider} label={item.divider} />
          ) : (
            <EventRow key={item.place} event={item} />
          )
        )}
      </ul>
      <TabBar />
    </div>
  );
}
